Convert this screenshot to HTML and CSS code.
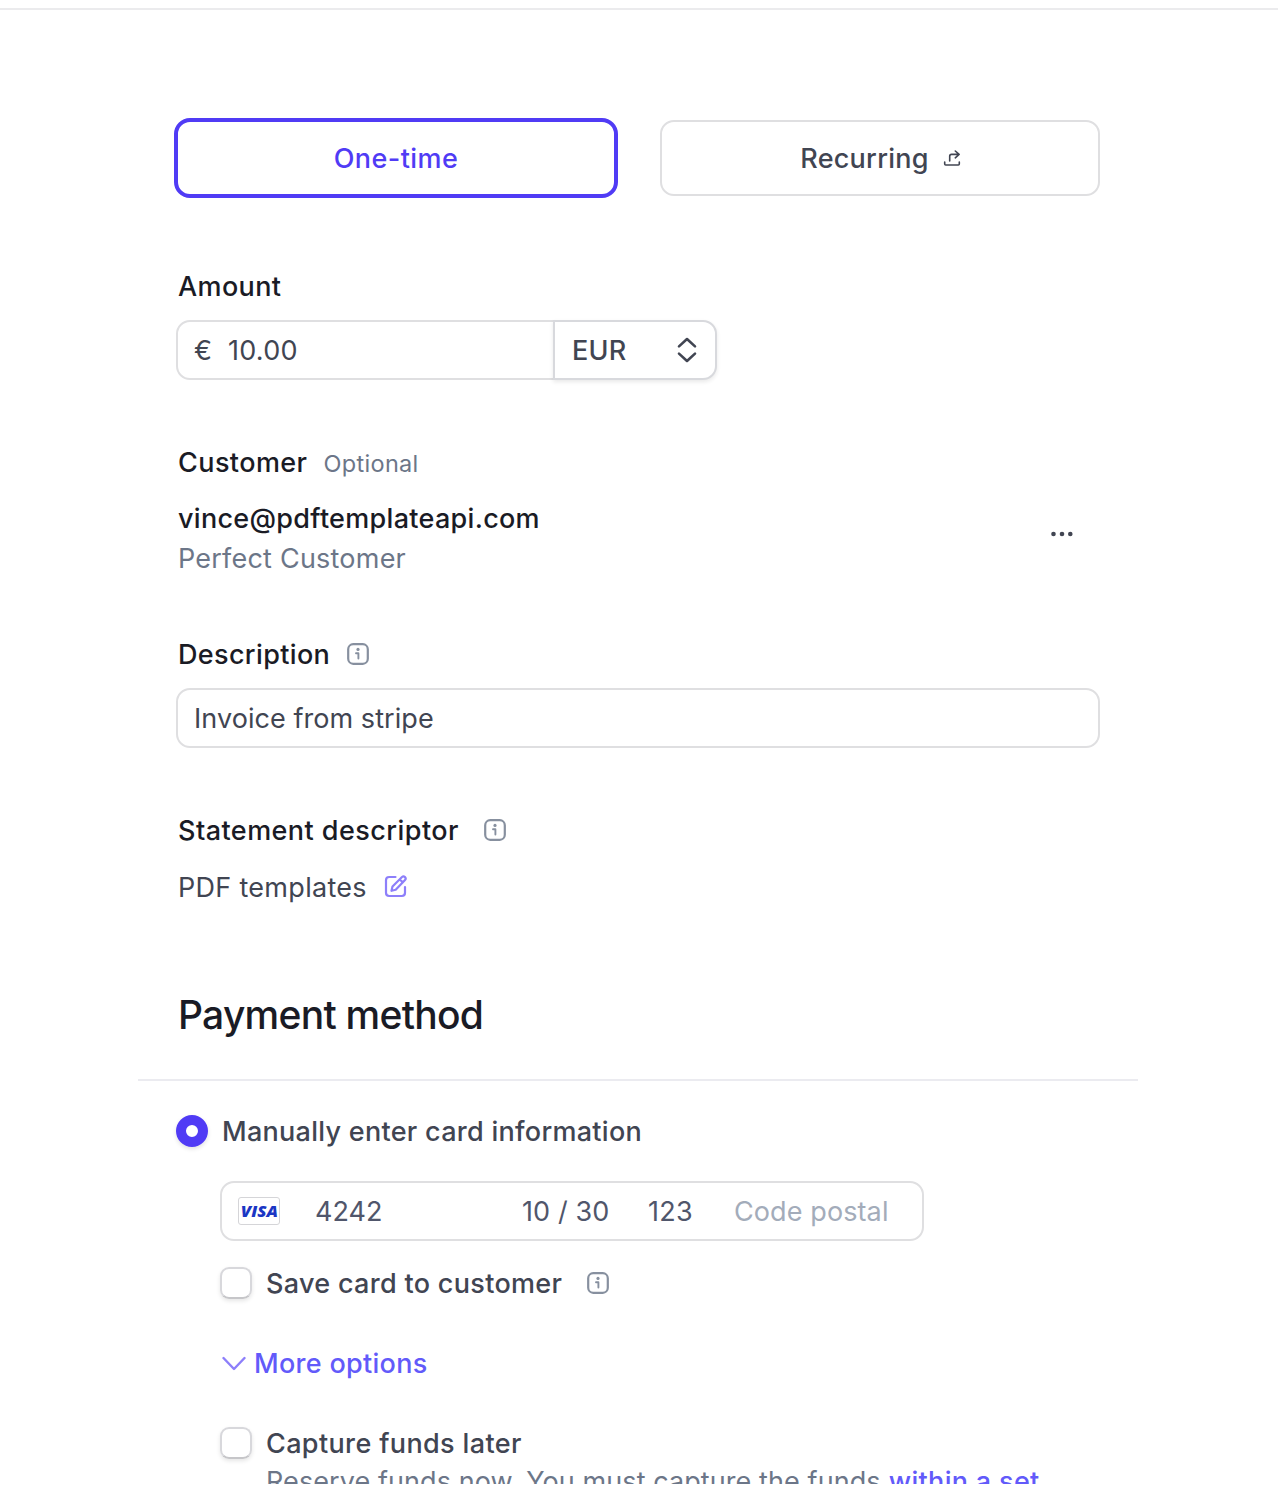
FILE: index.html
```html
<!DOCTYPE html>
<html lang="en">
<head>
  <meta charset="UTF-8" />
  <meta name="viewport" content="width=device-width, initial-scale=1.0" />
  <title>Create payment</title>
  <link rel="stylesheet" href="styles.css">
</head>
<body>
  <div class="page">
    <header class="topbar"></header>
    <main class="form">
      <div class="tabs">
        <div class="tab active"><span class="text t-onetime">One-time</span></div>
        <div class="tab">
          <span class="text t-recurring">Recurring</span>
          <svg class="share" width="18" height="18" viewBox="0 0 18 18" fill="none" stroke="currentColor" stroke-width="1.6" stroke-linecap="round" stroke-linejoin="round">
            <path d="M1.7 12v2q0 1 1 1h12.6q1 0 1-1v-2"/>
            <path d="M6.7 11V6.2q0-1.8 1.8-1.8h7M12.3 1l3.8 3.4-3.8 3.4"/>
          </svg>
        </div>
      </div>

      <section class="amount">
        <div class="label"><span class="text t-amount">Amount</span></div>
        <div class="group">
          <div class="input money"><span class="text euro">€</span><span class="text t-value">10.00</span></div>
          <div class="input currency">
            <span class="text t-eur">EUR</span>
            <svg width="20" height="26" viewBox="0 0 20 26" fill="none" stroke="currentColor" stroke-width="2.6" stroke-linecap="round" stroke-linejoin="round">
              <path d="M2 9.4L10 2l8 7.4M2 16.6l8 7.4 8-7.4"/>
            </svg>
          </div>
        </div>
      </section>

      <section class="customer">
        <div class="label"><span class="text t-customer">Customer</span><span class="optional">Optional</span></div>
        <div class="customer-row">
          <div>
            <div class="email"><span class="text t-email">vince@pdftemplateapi.com</span></div>
            <div class="name"><span class="text t-name">Perfect Customer</span></div>
          </div>
          <svg width="24" height="6" viewBox="0 0 24 6" fill="currentColor">
            <circle cx="3.5" cy="3" r="2.3"/><circle cx="12" cy="3" r="2.3"/><circle cx="20.3" cy="3" r="2.3"/>
          </svg>
        </div>
      </section>

      <section class="description">
        <div class="label">
          <span class="text t-description">Description</span>
          <svg class="info" width="22" height="22" viewBox="0 0 22 22" fill="none" stroke="currentColor">
            <rect x="1.2" y="1.2" width="19.6" height="19.6" rx="5" stroke-width="2.2"/>
            <path d="M9 10.2h2.4v5.3" stroke-width="1.9" stroke-linecap="round" stroke-linejoin="round"/>
            <circle cx="11" cy="6.4" r="1.6" fill="currentColor" stroke="none"/>
          </svg>
        </div>
        <div class="input"><span class="text t-invoice">Invoice from stripe</span></div>
      </section>

      <section class="statement">
        <div class="label">
          <span class="text t-statement">Statement descriptor</span>
          <svg class="info" width="22" height="22" viewBox="0 0 22 22" fill="none" stroke="currentColor">
            <rect x="1.2" y="1.2" width="19.6" height="19.6" rx="5" stroke-width="2.2"/>
            <path d="M9 10.2h2.4v5.3" stroke-width="1.9" stroke-linecap="round" stroke-linejoin="round"/>
            <circle cx="11" cy="6.4" r="1.6" fill="currentColor" stroke="none"/>
          </svg>
        </div>
        <div class="descriptor">
          <span class="text t-pdf">PDF templates</span>
          <svg class="edit" width="24" height="24" viewBox="0 0 24 24" fill="none" stroke="currentColor" stroke-width="2.2" stroke-linecap="round" stroke-linejoin="round">
            <path d="M11.5 3H5.2Q2 3 2 6.2v12.6Q2 22 5.2 22h12.6Q21 22 21 18.8V13"/>
            <path d="M7.5 16.8l1-4.3L18 3q1.5-1.3 3 .1 1.4 1.5 0 3L11.7 15.7zM15.7 5.3l3.1 3.1"/>
          </svg>
        </div>
      </section>

      <h2>Payment method</h2>
    </main>

    <section class="methods">
      <div class="option manual"><span class="radio"></span><span class="text t-manual">Manually enter card information</span></div>
      <div class="card-body">
        <div class="input card">
          <span class="visa"><span>VISA</span></span>
          <span class="text number">4242</span>
          <span class="text expiry">10 / 30</span>
          <span class="text cvc">123</span>
          <span class="text postal">Code postal</span>
        </div>
        <div class="option save">
          <span class="checkbox"></span><span class="text t-save">Save card to customer</span>
          <svg class="info" width="22" height="22" viewBox="0 0 22 22" fill="none" stroke="currentColor">
            <rect x="1.2" y="1.2" width="19.6" height="19.6" rx="5" stroke-width="2.2"/>
            <path d="M9 10.2h2.4v5.3" stroke-width="1.9" stroke-linecap="round" stroke-linejoin="round"/>
            <circle cx="11" cy="6.4" r="1.6" fill="currentColor" stroke="none"/>
          </svg>
        </div>
        <div class="more">
          <svg width="26" height="16" viewBox="0 0 26 16" fill="none" stroke="currentColor" stroke-width="2.4" stroke-linecap="round" stroke-linejoin="round">
            <path d="M3.5 3L14 14 24.5 3"/>
          </svg>
          <span class="text t-more">More options</span>
        </div>
        <div class="option capture"><span class="checkbox"></span><span class="text t-capture">Capture funds later</span></div>
        <div class="help"><span class="text t-help">Reserve funds now. You must capture the funds</span><a class="text t-within">within a set</a></div>
      </div>
    </section>
  </div>
</body>
</html>
```
FILE: styles.css
```css
* {
  box-sizing: border-box;
}
body {
  margin: 0;
  background: #fff;
  color: #414552;
  font-family: Inter, sans-serif;
  font-size: 27px;
  line-height: 40px;
  white-space: nowrap;
}
.page {
  height: 1484px;
  overflow: hidden;
}
svg {
  display: block;
  flex: none;
}
.topbar {
  height: 10px;
  border-bottom: 2px solid #ebebed;
}
.form {
  padding: 108px 178px 0 176px;
}
/* sits a pixel under the middle of its row */
.text {
  padding-top: 2px;
}
.tabs {
  display: flex;
  justify-content: space-between;
  align-items: center;
  height: 80px;
  margin-left: -2px;
}
.tab {
  display: flex;
  align-items: center;
  justify-content: center;
  width: 440px;
  height: 76px;
  border: 2px solid #dfdfe1;
  border-radius: 14px;
  font-weight: 500;
}
.tab.active {
  width: 444px;
  height: 80px;
  border: 4px solid #503bf5;
  border-radius: 16px;
  color: #503bf5;
}
.t-onetime {
  letter-spacing: 0.45px;
}
.t-recurring {
  padding-left: 1px;
  letter-spacing: 0.25px;
}
.share {
  margin: 2px 0 0 14px;
}
.label {
  display: flex;
  align-items: center;
  height: 40px;
  padding-left: 2px;
  color: #1a1b25;
  font-weight: 500;
}
.input {
  display: flex;
  align-items: center;
  height: 60px;
  padding: 0 16px;
  border: 2px solid #dfdfe1;
  border-radius: 14px;
  background: #fff;
}

.amount {
  margin-top: 68px;
}
.t-amount {
  letter-spacing: 0.38px;
}
.group {
  display: flex;
  margin-top: 14px;
}
.money {
  width: 379px;
  border-radius: 14px 0 0 14px;
}
.euro {
  width: 34px;
}
.t-value {
  letter-spacing: 0.25px;
}
.currency {
  justify-content: space-between;
  width: 164px;
  margin-left: -2px;
  padding: 0 18px 0 16px;
  border-color: #d8d9dd;
  border-radius: 0 14px 14px 0;
  font-weight: 500;
  box-shadow: 0 2px 4px rgba(0, 0, 0, 0.09);
}
.t-eur {
  padding-left: 1px;
  letter-spacing: 0.3px;
}

.customer {
  margin-top: 62px;
}
.t-customer {
  letter-spacing: 0.42px;
}
.optional {
  margin-left: 16px;
  padding-top: 4px;
  color: #6c7688;
  font-size: 23.5px;
  font-weight: 400;
  letter-spacing: 0.32px;
}
.customer-row {
  display: flex;
  align-items: center;
  justify-content: space-between;
  margin-top: 16px;
  padding: 0 26px 0 2px;
}
.customer-row svg {
  margin-top: -8px;
}
.email, .name, .help, .more, .descriptor {
  display: flex;
  align-items: center;
  height: 40px;
}
.email {
  color: #1a1b25;
  font-weight: 500;
}
.t-email {
  letter-spacing: 0.3px;
}
.name {
  color: #6c7688;
}
.t-name {
  letter-spacing: 0.22px;
}

.description {
  margin-top: 56px;
}
.description .input {
  margin-top: 14px;
}
.t-description {
  letter-spacing: 0.35px;
}
.t-invoice {
  letter-spacing: 0.06px;
}
.info {
  color: #87909f;
}
.description .info {
  margin-left: 17px;
}
.statement {
  margin-top: 62px;
}
.t-statement {
  letter-spacing: 0.45px;
}
.statement .info {
  margin-left: 25px;
}
.descriptor {
  margin-top: 17px;
  padding-left: 2px;
}
.t-pdf {
  letter-spacing: 0.3px;
}
.edit {
  margin: -2px 0 0 17px;
  color: #8d7ffa;
}
h2 {
  margin: 83px 0 0 2px;
  color: #1a1b25;
  font-size: 39px;
  font-weight: 500;
  line-height: 50px;
  letter-spacing: -0.74px;
}

.methods {
  margin: 39px 140px 0 138px;
  padding: 32px 38px 0;
  border-top: 2px solid #ebebf0;
}
.option {
  display: flex;
  align-items: center;
  height: 40px;
}
.manual {
  margin-top: -2px;
}
.t-manual {
  font-weight: 500;
  letter-spacing: 0.28px;
}
.radio {
  width: 32px;
  height: 32px;
  margin-right: 14px;
  border: 10px solid #503bf5;
  border-radius: 50%;
  box-shadow: 0 2px 4px rgba(0, 0, 0, 0.12);
}
.card-body {
  padding: 30px 0 0 44px;
}
.card {
  width: 704px;
  color: #50566b;
}
.visa {
  display: flex;
  align-items: center;
  justify-content: center;
  width: 42px;
  height: 28px;
  border: 1px solid #d5d5d8;
  border-radius: 3px;
  color: #1a36c4;
  font: italic 800 15px/26px "Open Sans", sans-serif;
}
.visa span {
  transform: scaleX(1.13);
}
.number {
  width: 207px;
  margin-left: 35px;
}
.expiry {
  width: 126px;
  letter-spacing: 0.1px;
}
.cvc {
  width: 86px;
  letter-spacing: 0.3px;
}
.postal {
  color: #a3acba;
  letter-spacing: 0.1px;
}
.checkbox {
  width: 32px;
  height: 32px;
  margin-right: 14px;
  border: 2px solid #d8d8dc;
  border-bottom-color: #c6c6c9;
  border-radius: 9px;
  box-shadow: 0 2px 4px rgba(0, 0, 0, 0.1);
}
.save {
  margin-top: 22px;
  font-weight: 500;
}
.t-save {
  letter-spacing: 0.31px;
}
.save .info {
  margin-left: 25px;
}
.more {
  margin-top: 40px;
  color: #625afa;
  font-weight: 500;
}
.more svg {
  margin-right: 8px;
  color: #8d7ffa;
}
.t-more {
  letter-spacing: 0.3px;
}
.capture {
  margin-top: 40px;
  font-weight: 500;
}
.t-capture {
  letter-spacing: 0.37px;
}
.help {
  margin-top: -2px;
  padding-left: 46px;
  color: #6c7688;
}
.t-help {
  letter-spacing: 0.08px;
}
.t-within {
  margin-left: 8px;
  color: #625afa;
  font-weight: 500;
  letter-spacing: 0.33px;
}
```
